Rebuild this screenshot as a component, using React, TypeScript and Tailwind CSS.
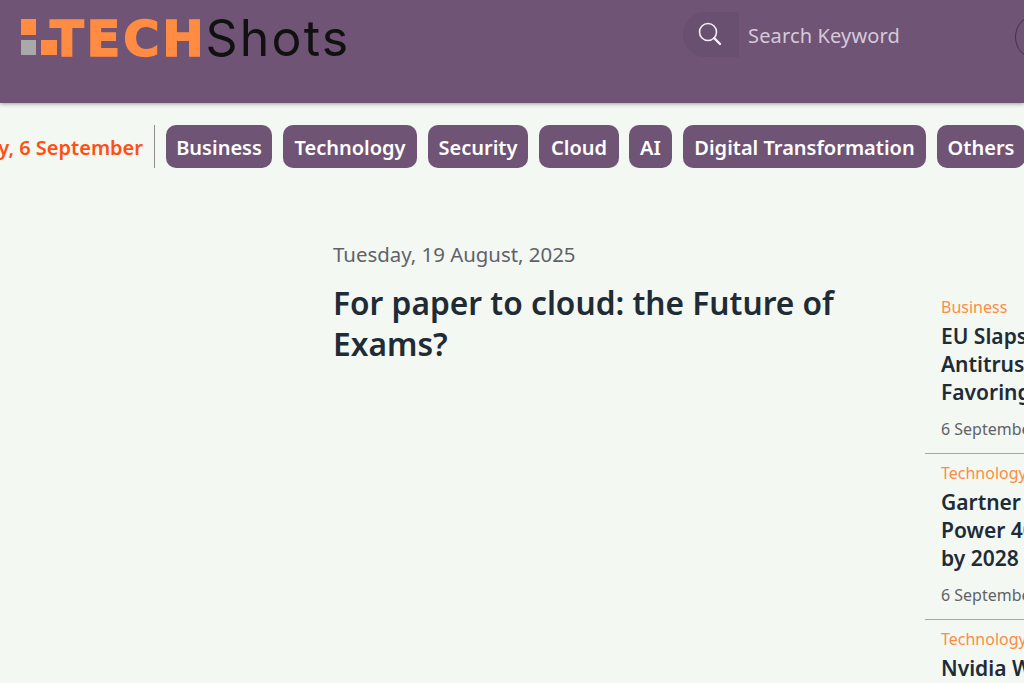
import React from "react";

const pills = [
  { t: "Business", w: "w-[106px]" },
  { t: "Technology", w: "w-[134px]" },
  { t: "Security", w: "w-[100px]" },
  { t: "Cloud", w: "w-[80px]" },
  { t: "AI", w: "w-[43px] -ml-[1px]" },
  { t: "Digital Transformation", w: "w-[243px]" },
  { t: "Others", w: "w-[88px]" },
];
const side = [
  { c: "Business", l: ["EU Slaps Google With", "Antitrust Fine Over", "Favoring Own Ads"] },
  { c: "Technology", l: ["Gartner Predicts AI", "Power 40% of Apps", "by 2028"] },
];

export default function App() {
  return (
    <div className="w-[1024px] h-[683px] overflow-hidden bg-[#f3f8f3] font-['Noto_Sans',sans-serif]">
      <header className="h-[103px] bg-[#6f5476] shadow-[0_1px_4px_rgba(0,0,0,0.35)] flex items-start overflow-hidden relative">
        <div className="ml-[21px] mt-[19px] flex items-start">
          <div className="grid grid-cols-[15px_16px] gap-x-[5px] gap-y-[5px] shrink-0">
            <div className="h-[16px] bg-[#ff8c42]" />
            <div className="h-[16px]" />
            <div className="h-[15px] bg-[#a9a9ab]" />
            <div className="h-[15px] bg-[#ff8c42]" />
          </div>
          <span className="-ml-[7px] -mt-[6px] text-[49.5px] leading-[52px] font-bold text-[#ff8c42] font-['DejaVu_Sans',sans-serif] tracking-[2.8px] [-webkit-text-stroke:1.6px_#ff8c42]">TECH</span>
          <span className="-ml-[1px] -mt-[7px] text-[50px] leading-[52px] font-normal text-[#111] font-['Inter',sans-serif] tracking-[2.2px]">Shots</span>
        </div>
        <div className="absolute left-[683px] top-[12px] flex items-center">
          <div className="w-[56px] h-[45px] rounded-l-[22px] bg-[#694f70] flex items-center justify-center">
            <svg width="26" height="26" viewBox="0 0 26 26" fill="none" className="-ml-[2px] -mt-[2px]">
              <circle cx="11" cy="11" r="8.5" stroke="#f3eef4" strokeWidth="1.6" />
              <path d="M17.2 17.2 L23 23" stroke="#f3eef4" strokeWidth="2.4" strokeLinecap="round" />
            </svg>
          </div>
          <span className="ml-[9px] mt-[2px] text-[20px] tracking-[0.15px] text-[#d6c9da]">Search Keyword</span>
        </div>
        <div className="absolute left-[1015px] top-[14px] w-[46px] h-[46px] rounded-full border border-[#3f3344]" />
      </header>

      <nav className="mt-[22px] h-[43px] flex justify-end items-stretch -mr-[1px]">
        <span className="shrink-0 self-center pt-[3px] text-[20px] font-semibold text-[#ff4f12] whitespace-nowrap">Saturday, 6 September</span>
        <div className="shrink-0 w-px bg-[#8d8d8d] ml-[11px] mr-[11px]" />
        <div className="flex gap-[11px] shrink-0">
          {pills.map((p) => (
            <div key={p.t} className={`${p.w} shrink-0 h-[43px] pt-[3px] rounded-[10px] bg-[#6f5476] text-white text-[20px] font-semibold flex items-center justify-center whitespace-nowrap`}>
              {p.t}
            </div>
          ))}
        </div>
      </nav>

      <main className="flex mt-[72px]">
        <article className="ml-[333px] w-[540px] shrink-0">
          <p className="text-[20.4px] leading-[28px] text-[#5f6368]">Tuesday, 19 August, 2025</p>
          <h1 className="mt-[14px] text-[31.7px] leading-[41px] font-semibold text-[#212b36]">For paper to cloud: the Future of Exams?</h1>
        </article>
        <aside className="ml-[52px] w-[300px] shrink-0 mt-[55px]">
          {side.map((s) => (
            <div key={s.c} className="border-b border-[#a8a8a8] mb-[7px] h-[159px]">
              <p className="ml-[16px] text-[16px] leading-[24px] text-[#ff8c42]">{s.c}</p>
              <h2 className="ml-[16px] mt-[3px] text-[21px] leading-[28px] font-semibold text-[#212b36] whitespace-nowrap">
                {s.l.map((x) => <span key={x} className="block">{x}</span>)}
              </h2>
              <p className="ml-[16px] mt-[11px] text-[16px] leading-[24px] text-[#5f6368] whitespace-nowrap">6 September, 2025</p>
            </div>
          ))}
          <p className="ml-[16px] text-[16px] leading-[24px] text-[#ff8c42]">Technology</p>
          <h2 className="ml-[16px] mt-[3px] text-[21px] leading-[28px] font-semibold text-[#212b36] whitespace-nowrap">Nvidia Wins Big</h2>
        </aside>
      </main>
    </div>
  );
}
